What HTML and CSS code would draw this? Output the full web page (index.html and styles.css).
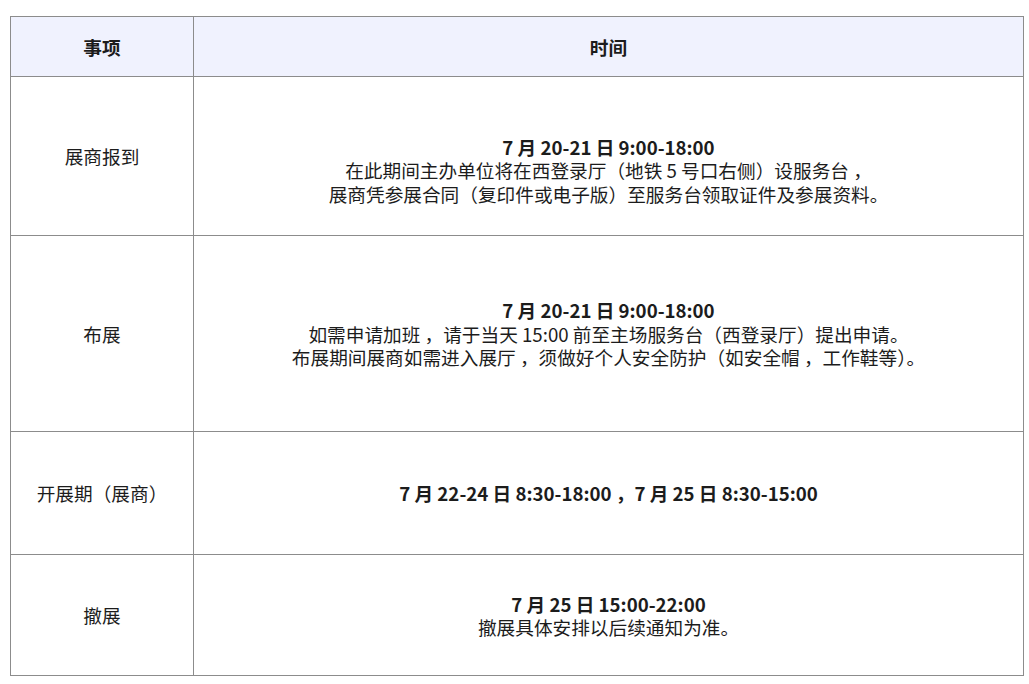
FILE: index.html
```html
<!DOCTYPE html>
<html lang="zh-CN">
<head>
<meta charset="utf-8">
<title>日程安排</title>
<link rel="stylesheet" href="styles.css">
</head>
<body>
<table class="schedule">
  <colgroup>
    <col class="col-item">
    <col class="col-time">
  </colgroup>
  <thead>
    <tr class="row-head">
      <th>事项</th>
      <th>时间</th>
    </tr>
  </thead>
  <tbody>
    <tr class="row-1">
      <td>展商报到</td>
      <td class="detail shift">
        <p class="strong">7 月 20-21 日 9:00-18:00</p>
        <p>在此期间主办单位将在西登录厅（地铁 5 号口右侧）设服务台 ，</p>
        <p>展商凭参展合同（复印件或电子版）至服务台领取证件及参展资料。</p>
      </td>
    </tr>
    <tr class="row-2">
      <td>布展</td>
      <td class="detail">
        <p class="strong">7 月 20-21 日 9:00-18:00</p>
        <p>如需申请加班 ，请于当天 15:00 前至主场服务台（西登录厅）提出申请。</p>
        <p>布展期间展商如需进入展厅 ，须做好个人安全防护（如安全帽 ，工作鞋等）。</p>
      </td>
    </tr>
    <tr class="row-3">
      <td>开展期（展商）</td>
      <td class="detail">
        <p class="strong">7 月 22-24 日 8:30-18:00 ，7 月 25 日 8:30-15:00</p>
      </td>
    </tr>
    <tr class="row-4">
      <td>撤展</td>
      <td class="detail">
        <p class="strong">7 月 25 日 15:00-22:00</p>
        <p>撤展具体安排以后续通知为准。</p>
      </td>
    </tr>
  </tbody>
</table>
</body>
</html>
```

FILE: styles.css
```css
html, body {
  margin: 0;
  padding: 0;
  background: #ffffff;
}

body {
  font-family: "Noto Sans CJK SC", "Noto Sans", sans-serif;
  font-size: 18.67px;
  color: #1c1c1c;
  padding: 16px 0 0 10px;
}

.schedule {
  border-collapse: collapse;
  width: 1014px;
  table-layout: fixed;
  border: 1px solid #8c8c8c;
}

.col-item {
  width: 183px;
}

.schedule th,
.schedule td {
  border: 1px solid #8c8c8c;
  text-align: center;
  vertical-align: middle;
  padding: 0;
  line-height: 23.5px;
}

.schedule th {
  background: #f0f2fe;
  font-weight: 700;
}

.row-head { height: 60px; }
.row-1 { height: 159px; }
.row-2 { height: 196px; }
.row-3 { height: 123px; }
.row-4 { height: 121px; }

.detail p {
  margin: 0;
}

.detail .strong {
  font-weight: 700;
}

.detail.shift {
  padding-top: 28px;
}
```
